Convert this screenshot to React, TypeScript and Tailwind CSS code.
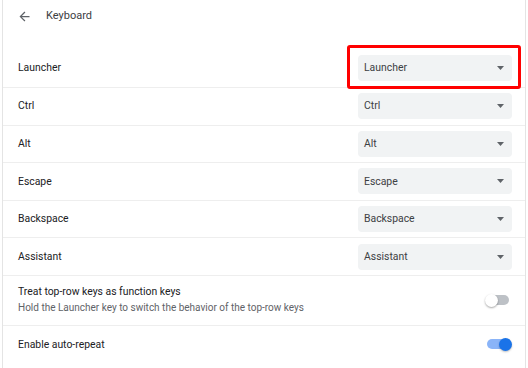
const keys = ['Launcher', 'Ctrl', 'Alt', 'Escape', 'Backspace', 'Assistant']

function Select({ value }: { value: string }) {
  return (
    <div className="flex h-[26px] w-[154px] items-center justify-between rounded-[4px] bg-[#f1f3f4] pl-[6px] pr-[8px] text-[10.4px] text-[#3c4043]">
      <span>{value}</span>
      <svg width="7" height="4" viewBox="0 0 7 4">
        <path d="M0 0h7L3.5 4z" fill="#5f6368" />
      </svg>
    </div>
  )
}

function Toggle({ on }: { on: boolean }) {
  return (
    <div className="relative h-[13px] w-[27px]">
      <div
        className={
          on
            ? 'absolute left-[2px] top-[1.5px] h-[10px] w-[22px] rounded-full bg-[#8ab4f8]'
            : 'absolute left-[2px] top-[1.5px] h-[10px] w-[22px] rounded-full bg-[#bdc1c6]'
        }
      />
      {on ? (
        <div className="absolute right-0 top-0 h-[13px] w-[13px] rounded-full bg-[#1a73e8] shadow-[0_1px_2px_rgba(0,0,0,0.25)]" />
      ) : (
        <div className="absolute left-0 top-0 h-[13px] w-[13px] rounded-full bg-white shadow-[0_1px_2px_rgba(0,0,0,0.35)]" />
      )}
    </div>
  )
}

export default function App() {
  return (
    <div className="relative h-[368px] w-[528px] overflow-hidden bg-white font-['Roboto','Liberation_Sans',sans-serif] text-[#202124]">
      <div className="ml-[2px] h-full w-[524px] border-x border-[#e4e4e4]">
        <div className="flex h-[32px] items-center">
          <svg className="ml-[13.5px]" width="15" height="15" viewBox="0 0 24 24">
            <path d="M20 11H7.83l5.59-5.59L12 4l-8 8 8 8 1.41-1.41L7.83 13H20v-2z" fill="#5f6368" />
          </svg>
          <span className="ml-[14.5px] text-[11px] text-[#3c4043]">Keyboard</span>
        </div>
        <div className="h-[17.4px]" />
        {keys.map((k, i) => (
          <div
            key={k}
            className={
              i === 0
                ? 'flex h-[37.6px] items-center justify-between pl-[15px] pr-[13px]'
                : 'flex h-[37.6px] items-center justify-between border-t border-[#eeeeee] pl-[15px] pr-[13px]'
            }
          >
            <span className="text-[10.4px]">{k}</span>
            <Select value={k} />
          </div>
        ))}
        <div className="flex h-[50px] items-center justify-between border-t border-[#eeeeee] pl-[15px] pr-[13px]">
          <div className="flex flex-col">
            <span className="text-[10.4px] leading-[16px]">Treat top-row keys as function keys</span>
            <span className="text-[10px] leading-[16px] text-[#5f6368]">
              Hold the Launcher key to switch the behavior of the top-row keys
            </span>
          </div>
          <Toggle on={false} />
        </div>
        <div className="flex h-[38px] items-center justify-between border-t border-[#eeeeee] pl-[15px] pr-[13px]">
          <span className="text-[10.4px]">Enable auto-repeat</span>
          <Toggle on />
        </div>
      </div>
      <div className="absolute left-[347px] top-[45px] h-[44px] w-[174px] rounded-[3px] border-[3.5px] border-[#ff0000]" />
    </div>
  )
}
